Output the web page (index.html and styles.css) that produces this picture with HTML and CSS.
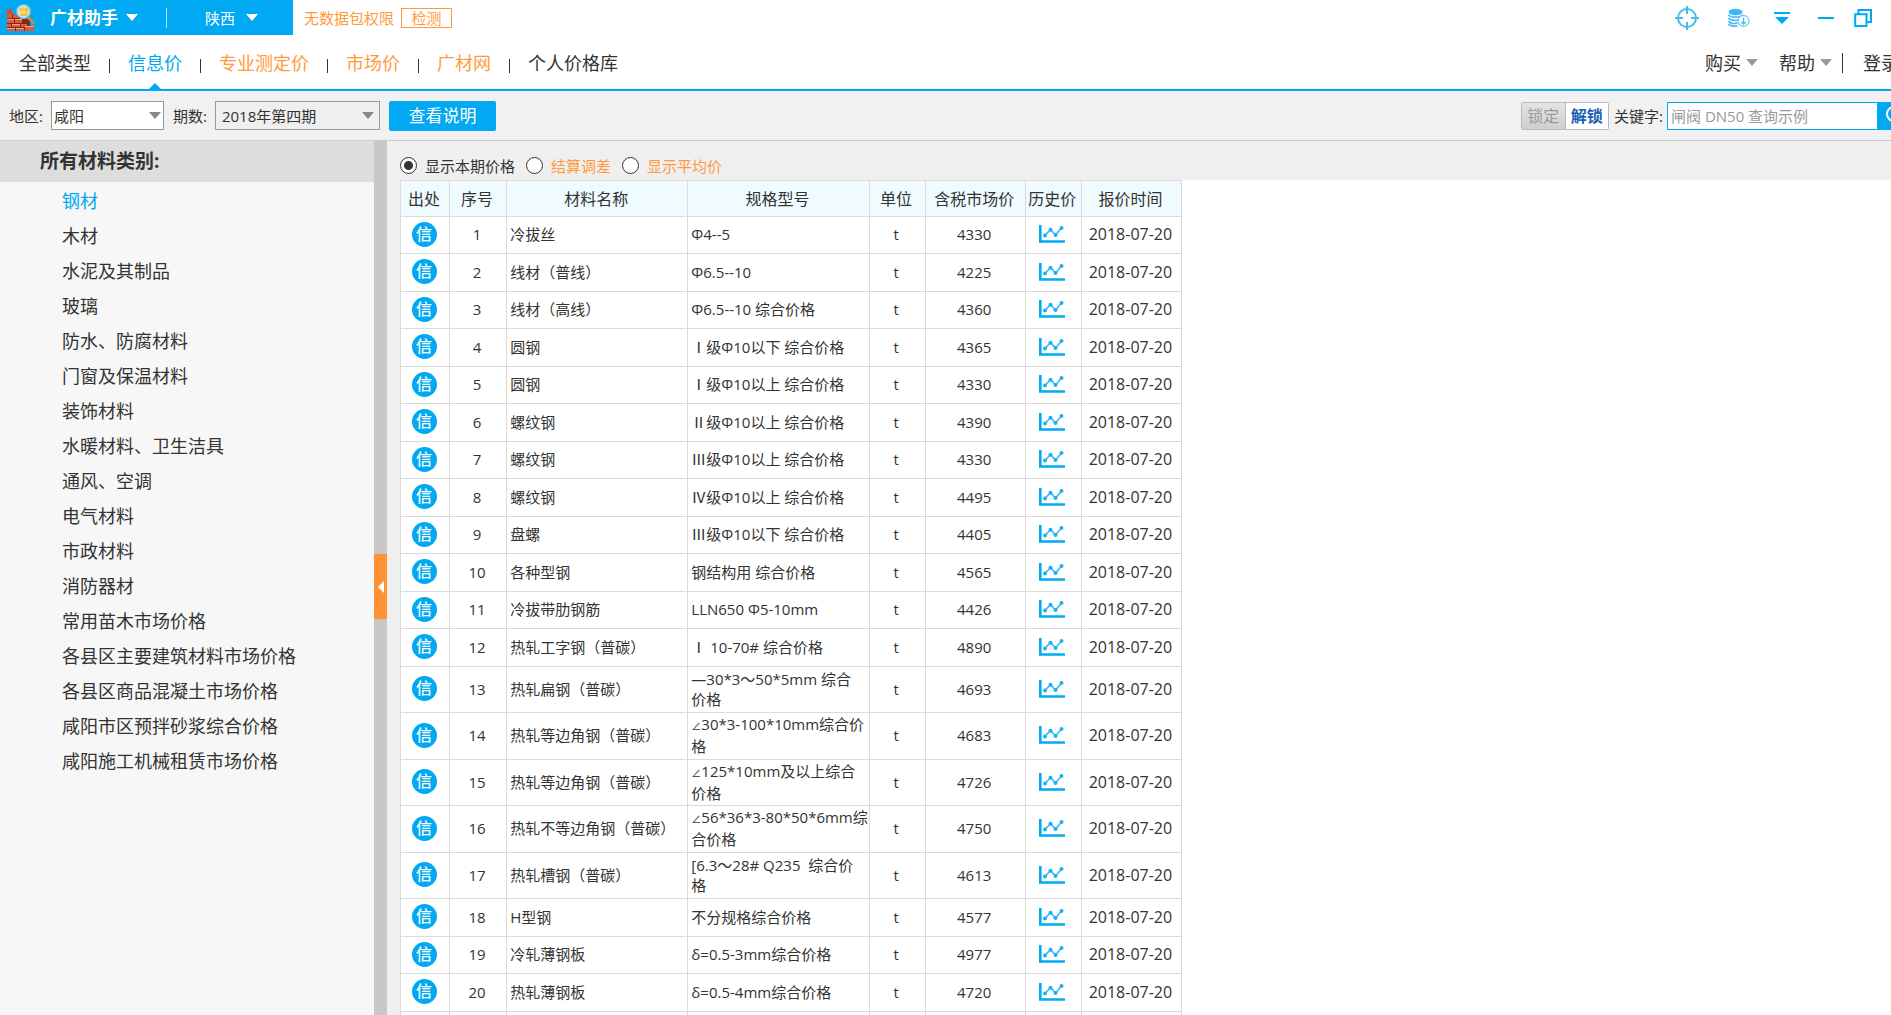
FILE: index.html
```html
<!DOCTYPE html>
<html lang="zh-CN">
<head>
<meta charset="utf-8">
<title>广材助手</title>
<link rel="stylesheet" href="styles.css">
</head>
<body>
<svg class="defs" aria-hidden="true">
  <symbol id="chart" viewBox="0 0 26 18"><path d="M1.300 0V16.500H26" fill="none" stroke="#00aaf2" stroke-width="2.600"/><path d="M6 10.500L11.500 4.500L16.500 10L22.500 3" fill="none" stroke="#38b9f5" stroke-width="1.600"/><g fill="#1db0f4"><circle cx="6" cy="10.500" r="2"/><circle cx="11.500" cy="4.800" r="2"/><circle cx="16.500" cy="10" r="2"/><circle cx="22.500" cy="3" r="2"/></g></symbol>
</svg>
<div class="app">
  <header class="titlebar">
    <div class="brand">
      <svg class="logo" viewBox="0 0 28 28" aria-hidden="true">
        <rect y="5" width="27" height="22" fill="none"/>
        <path d="M0 5h5v5H0z" fill="#e2452c"/>
        <path d="M0 10h9l5 3h4l5 3v11H0z" fill="#7c2a1f"/>
        <path d="M0 10h5v4H0zM6 10h5v4H6zM0 15h7v4H0zM8 15h7v4H8zM0 20h4v3H0zM5 20h8v3H5zM14 20h6v3h-6zM0 24h8v3H0zM9 24h8v3H9zM18 22h9v5h-9z" fill="#e2583a"/>
        <path d="M0 15h7v1H0zM8 15h7v1H8zM5 20h8v1H5zM9 24h8v1H9zM18 22h9v1h-9zM0 24h8v1H0z" fill="#f6a582"/>
        <path d="M21.500 14l5 5" stroke="#c98b2b" stroke-width="3" stroke-linecap="round"/>
        <circle cx="16.500" cy="7.500" r="7" fill="#cfeaf5" stroke="#6fb6d8" stroke-width="1.500"/>
        <path d="M12 5l3-2 2 2 2-2 3 2-1.500 3v4h-7V8z" fill="#f0c53c"/>
        <path d="M14.500 6.500h4v3h-4z" fill="#fbe584"/>
      </svg>
      <button class="brand-name" type="button">广材助手<i class="caret"></i></button>
      <i class="brand-sep"></i>
      <button class="province" type="button">陕西<i class="caret"></i></button>
    </div>
    <span class="notice">无数据包权限</span>
    <button class="detect" type="button">检测</button>
    <div class="window-tools">
      <button type="button" aria-label="定位"><svg width="26" height="26" viewBox="0 0 26 26" fill="none" stroke="#45bfe9"><circle cx="13" cy="13" r="9" stroke-width="2"/><path d="M13 1v8M13 17v8M1 13h8M17 13h8" stroke-width="2"/></svg></button>
      <button type="button" aria-label="数据包下载"><svg width="22" height="20" viewBox="0 0 22 20"><ellipse cx="7.500" cy="4" rx="7" ry="3.200" fill="#3db8f6"/><path d="M.5 6.500c1 3.500 13 3.500 14 0M.5 9.800c1 3.200 11 3.200 13 1M.5 13c1 2.500 6 3 9 2M.5 16c1 2 6 2.500 9 2" fill="none" stroke="#4dbcf6" stroke-width="1.700"/><circle cx="15.500" cy="13" r="5.500" fill="#fff" stroke="#74c8f5" stroke-width="1.300"/><path d="M15.500 9.500v6.500M13.300 14l2.200 2.300 2.200-2.300" fill="none" stroke="#4dbcf6" stroke-width="1.400"/></svg></button>
      <button type="button" aria-label="菜单"><svg width="16" height="14" viewBox="0 0 16 14" fill="#00a9f1"><path d="M0 1h16v2H0zM1 6h14l-7 7z"/></svg></button>
      <button type="button" aria-label="最小化"><svg width="16" height="14" viewBox="0 0 16 14" fill="#00a9f1"><path d="M0 6h16v2H0z"/></svg></button>
      <button type="button" aria-label="还原"><svg width="18" height="18" viewBox="0 0 18 18" fill="none" stroke="#00a9f1" stroke-width="2"><path d="M4.500 5V1H17v12h-4"/><path d="M1.200 5.200h11.300V17H1.200z"/></svg></button>
    </div>
  </header>

  <nav class="nav">
    <a href="#all">全部类型</a><i></i>
    <a href="#info" class="active">信息价</a><i></i>
    <a href="#pro" class="paid">专业测定价</a><i></i>
    <a href="#market" class="paid">市场价</a><i></i>
    <a href="#gcw" class="paid">广材网</a><i></i>
    <a href="#mine">个人价格库</a>
    <div class="account">
      <button type="button">购买<b class="caret gray"></b></button>
      <button type="button">帮助<b class="caret gray"></b></button>
      <a href="#login">登录</a>
    </div>
  </nav>

  <div class="toolbar">
    <label for="area">地区:</label>
    <span class="picker area"><select id="area"><option>咸阳</option></select></span>
    <label for="period">期数:</label>
    <span class="picker period"><select id="period"><option>2018年第四期</option></select></span>
    <button class="primary" type="button">查看说明</button>
    <div class="search">
      <div class="lock"><button type="button" disabled>锁定</button><button type="button" class="on">解锁</button></div>
      <label for="kw">关键字:</label>
      <input id="kw" type="text" placeholder="闸阀 DN50 查询示例"><button class="go" type="button" aria-label="搜索"><svg width="22" height="22" viewBox="0 0 22 22" fill="none" stroke="#fff" stroke-width="2"><circle cx="9" cy="9" r="7"/><path d="M14 14l6 6"/></svg></button>
    </div>
  </div>

  <div class="body">
    <aside class="sidebar">
      <h2>所有材料类别:</h2>
      <ul>
        <li><a href="#c1" class="active">钢材</a></li>
        <li><a href="#c2">木材</a></li>
        <li><a href="#c3">水泥及其制品</a></li>
        <li><a href="#c4">玻璃</a></li>
        <li><a href="#c5">防水、防腐材料</a></li>
        <li><a href="#c6">门窗及保温材料</a></li>
        <li><a href="#c7">装饰材料</a></li>
        <li><a href="#c8">水暖材料、卫生洁具</a></li>
        <li><a href="#c9">通风、空调</a></li>
        <li><a href="#c10">电气材料</a></li>
        <li><a href="#c11">市政材料</a></li>
        <li><a href="#c12">消防器材</a></li>
        <li><a href="#c13">常用苗木市场价格</a></li>
        <li><a href="#c14">各县区主要建筑材料市场价格</a></li>
        <li><a href="#c15">各县区商品混凝土市场价格</a></li>
        <li><a href="#c16">咸阳市区预拌砂浆综合价格</a></li>
        <li><a href="#c17">咸阳施工机械租赁市场价格</a></li>
      </ul>
    </aside>
    <div class="splitter"><button type="button" aria-label="收起"></button></div>
    <main class="main">
      <div class="modes">
        <input type="radio" name="mode" id="m1" checked><label for="m1">显示本期价格</label>
        <input type="radio" name="mode" id="m2"><label for="m2" class="paid">结算调差</label>
        <input type="radio" name="mode" id="m3"><label for="m3" class="paid">显示平均价</label>
      </div>
      <div class="sheet">
      <table>
        <colgroup><col class="w-src"><col class="w-no"><col class="w-text"><col class="w-text"><col class="w-unit"><col class="w-wide"><col class="w-unit"><col class="w-wide"></colgroup>
        <thead><tr><th>出处</th><th>序号</th><th>材料名称</th><th>规格型号</th><th>单位</th><th>含税市场价</th><th>历史价</th><th>报价时间</th></tr></thead>
        <tbody>
          <tr><td><span class="badge">信</span></td><td>1</td><td>冷拔丝</td><td>Φ4--5</td><td>t</td><td>4330</td><td><svg class="chart"><use href="#chart"/></svg></td><td>2018-07-20</td></tr>
          <tr><td><span class="badge">信</span></td><td>2</td><td>线材（普线）</td><td>Φ6.5--10</td><td>t</td><td>4225</td><td><svg class="chart"><use href="#chart"/></svg></td><td>2018-07-20</td></tr>
          <tr><td><span class="badge">信</span></td><td>3</td><td>线材（高线）</td><td>Φ6.5--10 综合价格</td><td>t</td><td>4360</td><td><svg class="chart"><use href="#chart"/></svg></td><td>2018-07-20</td></tr>
          <tr><td><span class="badge">信</span></td><td>4</td><td>圆钢</td><td>Ⅰ级Φ10以下 综合价格</td><td>t</td><td>4365</td><td><svg class="chart"><use href="#chart"/></svg></td><td>2018-07-20</td></tr>
          <tr><td><span class="badge">信</span></td><td>5</td><td>圆钢</td><td>Ⅰ级Φ10以上 综合价格</td><td>t</td><td>4330</td><td><svg class="chart"><use href="#chart"/></svg></td><td>2018-07-20</td></tr>
          <tr><td><span class="badge">信</span></td><td>6</td><td>螺纹钢</td><td>Ⅱ级Φ10以上 综合价格</td><td>t</td><td>4390</td><td><svg class="chart"><use href="#chart"/></svg></td><td>2018-07-20</td></tr>
          <tr><td><span class="badge">信</span></td><td>7</td><td>螺纹钢</td><td>Ⅲ级Φ10以上 综合价格</td><td>t</td><td>4330</td><td><svg class="chart"><use href="#chart"/></svg></td><td>2018-07-20</td></tr>
          <tr><td><span class="badge">信</span></td><td>8</td><td>螺纹钢</td><td>Ⅳ级Φ10以上 综合价格</td><td>t</td><td>4495</td><td><svg class="chart"><use href="#chart"/></svg></td><td>2018-07-20</td></tr>
          <tr><td><span class="badge">信</span></td><td>9</td><td>盘螺</td><td>Ⅲ级Φ10以下 综合价格</td><td>t</td><td>4405</td><td><svg class="chart"><use href="#chart"/></svg></td><td>2018-07-20</td></tr>
          <tr><td><span class="badge">信</span></td><td>10</td><td>各种型钢</td><td>钢结构用 综合价格</td><td>t</td><td>4565</td><td><svg class="chart"><use href="#chart"/></svg></td><td>2018-07-20</td></tr>
          <tr><td><span class="badge">信</span></td><td>11</td><td>冷拔带肋钢筋</td><td>LLN650 Φ5-10mm</td><td>t</td><td>4426</td><td><svg class="chart"><use href="#chart"/></svg></td><td>2018-07-20</td></tr>
          <tr><td><span class="badge">信</span></td><td>12</td><td>热轧工字钢（普碳）</td><td>Ⅰ 10-70# 综合价格</td><td>t</td><td>4890</td><td><svg class="chart"><use href="#chart"/></svg></td><td>2018-07-20</td></tr>
          <tr class="tall"><td><span class="badge">信</span></td><td>13</td><td>热轧扁钢（普碳）</td><td>—30*3～50*5mm 综合<br>价格</td><td>t</td><td>4693</td><td><svg class="chart"><use href="#chart"/></svg></td><td>2018-07-20</td></tr>
          <tr class="tall"><td><span class="badge">信</span></td><td>14</td><td>热轧等边角钢（普碳）</td><td><span class="angle">∠</span>30*3-100*10mm综合价<br>格</td><td>t</td><td>4683</td><td><svg class="chart"><use href="#chart"/></svg></td><td>2018-07-20</td></tr>
          <tr class="tall"><td><span class="badge">信</span></td><td>15</td><td>热轧等边角钢（普碳）</td><td><span class="angle">∠</span>125*10mm及以上综合<br>价格</td><td>t</td><td>4726</td><td><svg class="chart"><use href="#chart"/></svg></td><td>2018-07-20</td></tr>
          <tr class="tall"><td><span class="badge">信</span></td><td>16</td><td>热轧不等边角钢（普碳）</td><td><span class="angle">∠</span>56*36*3-80*50*6mm综<br>合价格</td><td>t</td><td>4750</td><td><svg class="chart"><use href="#chart"/></svg></td><td>2018-07-20</td></tr>
          <tr class="tall"><td><span class="badge">信</span></td><td>17</td><td>热轧槽钢（普碳）</td><td>[6.3～28# Q235&nbsp; 综合价<br>格</td><td>t</td><td>4613</td><td><svg class="chart"><use href="#chart"/></svg></td><td>2018-07-20</td></tr>
          <tr><td><span class="badge">信</span></td><td>18</td><td>H型钢</td><td>不分规格综合价格</td><td>t</td><td>4577</td><td><svg class="chart"><use href="#chart"/></svg></td><td>2018-07-20</td></tr>
          <tr><td><span class="badge">信</span></td><td>19</td><td>冷轧薄钢板</td><td>δ=0.5-3mm综合价格</td><td>t</td><td>4977</td><td><svg class="chart"><use href="#chart"/></svg></td><td>2018-07-20</td></tr>
          <tr><td><span class="badge">信</span></td><td>20</td><td>热轧薄钢板</td><td>δ=0.5-4mm综合价格</td><td>t</td><td>4720</td><td><svg class="chart"><use href="#chart"/></svg></td><td>2018-07-20</td></tr>
          <tr><td></td><td></td><td></td><td></td><td></td><td></td><td></td><td></td></tr>
        </tbody>
      </table>
      </div>
    </main>
  </div>
</div>
</body>
</html>
```
FILE: styles.css
```css
:root {
  --blue: #00a9f1;
  --orange: #ff9a3c;
  --text: #333;
  --line: #dadada;
}
* { box-sizing: border-box; }
body {
  margin: 0;
  height: 100vh;
  overflow: hidden;
  background: #fff;
  color: var(--text);
  font: 15px/20px "Open Sans", "Noto Sans CJK SC", sans-serif;
}
button, input, select { font: inherit; color: inherit; }
button { padding: 0; border: 0; background: none; white-space: nowrap; }
a { color: inherit; text-decoration: none; }
.defs { display: none; }

/* The window runs slightly past the right edge of the screen. */
.app {
  display: flex;
  flex-direction: column;
  width: calc(100% + 24px);
  height: 100%;
}

.caret {
  display: inline-block;
  border: 6px solid transparent;
  border-top: 7px solid #fff;
  border-bottom: 0;
}
.caret.gray { border-top-color: #999; }
.paid { color: var(--orange); }

/* Title bar */
.titlebar { display: flex; align-items: center; height: 35px; }
.brand {
  display: flex;
  align-items: center;
  width: 293px;
  height: 35px;
  padding-left: 7px;
  background: var(--blue);
  color: #fff;
}
.logo { width: 28px; height: 28px; }
.brand-name, .province { display: flex; align-items: center; gap: 8px; }
.brand-name { margin-left: 15px; font-size: 17px; font-weight: 700; }
.brand-sep { width: 1px; height: 20px; margin: 0 38px 0 28px; background: #b5e4fb; }
.province { gap: 11px; }
.notice { margin-left: 11px; color: var(--orange); }
.detect {
  width: 51px;
  height: 20px;
  margin-left: 7px;
  border: 1px solid var(--orange);
  color: var(--orange);
  line-height: 18px;
}
.window-tools { display: flex; align-items: center; margin-left: auto; margin-right: 43px; }
.window-tools button { display: flex; }
.window-tools button + button { margin-left: 28px; }
.window-tools button:nth-child(3) { margin-left: 24px; }
.window-tools button:last-child { margin-left: 20px; }

/* Navigation */
.nav {
  display: flex;
  align-items: center;
  height: 56px;
  padding-left: 19px;
  border-bottom: 2px solid var(--blue);
  font-size: 18px;
}
.nav > i { width: 1px; height: 14px; margin: 8px 18px 0; background: var(--text); }
.nav > a { position: relative; padding-top: 2px; line-height: 52px; }
.nav .active { color: var(--blue); }
.nav .active::after {
  content: "";
  position: absolute;
  bottom: 0;
  left: calc(50% - 6px);
  border: 6px solid transparent;
  border-top: 0;
  border-bottom-color: var(--blue);
}
.account { display: flex; align-items: center; margin-left: auto; padding-top: 1px; }
.account button { display: flex; align-items: center; gap: 5px; margin-right: 21px; }
.account button:nth-child(2) { margin-right: 10px; }
.account a { width: 73px; padding-left: 20px; border-left: 1px solid var(--text); }

/* Filters */
.toolbar {
  display: flex;
  align-items: center;
  height: 50px;
  padding: 0 0 0 9px;
  background: #f1f1f1;
  border-bottom: 1px solid #ccc;
}
.picker { position: relative; margin: 0 9px 0 8px; }
.picker select {
  appearance: none;
  width: 100%;
  height: 29px;
  padding: 0 2px;
  border: 1px solid #999;
  border-radius: 0;
  background: #fff;
}
.picker::after {
  content: "";
  position: absolute;
  top: 11px;
  right: 3px;
  border: 6px solid transparent;
  border-top: 7px solid #888;
  border-bottom: 0;
  pointer-events: none;
}
.area { width: 113px; }
.period { width: 165px; }
.period select { padding: 0 6px; background: #efefef; }
.period::after { right: 6px; }
.primary {
  width: 107px;
  height: 30px;
  border-radius: 2px;
  background: var(--blue);
  color: #fff;
  font-size: 17px;
}
.search { display: flex; align-items: center; margin-left: auto; }
.lock {
  display: flex;
  width: 88px;
  height: 28px;
  margin-right: 5px;
  border: 1px solid #bbb;
  border-radius: 2px;
  overflow: hidden;
  font-size: 16px;
}
.lock button { flex: 1; background: linear-gradient(#e4e4e4, #cfcfcf); color: #999; }
.lock .on { border-left: 1px solid #bbb; background: #fff; color: #1b62b3; font-weight: 700; }
.search input {
  width: 211px;
  height: 28px;
  margin-left: 4px;
  padding: 0 3px;
  border: 1px solid var(--blue);
  border-radius: 0;
  background: #fff;
}
.search input::placeholder { color: #999; opacity: 1; }
.go { display: flex; align-items: center; width: 37px; height: 28px; padding-left: 7px; background: var(--blue); }

/* Content */
.body { display: flex; flex: 1; min-height: 0; }
.sidebar { width: 374px; background: #f7f7f7; }
.sidebar h2 {
  margin: 0 0 2px;
  padding-left: 40px;
  background: #ddd;
  font-size: 19px;
  line-height: 41px;
}
.sidebar ul { margin: 0; padding: 0; list-style: none; }
.sidebar li { padding-left: 62px; font-size: 18px; line-height: 35px; }
.sidebar .active { color: var(--blue); }
.splitter { width: 13px; padding-top: 413px; background: #c8c7c5; }
.splitter button {
  display: flex;
  align-items: center;
  justify-content: center;
  width: 13px;
  height: 65px;
  background: #ff9235;
}
.splitter button::before {
  content: "";
  border: 6px solid transparent;
  border-right-color: #fff;
  border-left: 0;
}
.main { display: flex; flex: 1; flex-direction: column; min-width: 0; padding-left: 13px; background: #efefef; }
.modes { display: flex; align-items: center; height: 39px; padding-top: 10px; }
.modes input {
  appearance: none;
  width: 17px;
  height: 17px;
  margin: 0 8px 0 0;
  border: 1px solid #333;
  border-radius: 50%;
  background: #fff;
}
.modes input:checked { background: radial-gradient(circle, #333 4px, #fff 5px); }
.modes label { margin-right: 11px; }
.sheet { flex: 1; min-height: 0; overflow: hidden; background: #fff; }

table { width: 782px; table-layout: fixed; border-collapse: collapse; }
.w-src { width: 49px; }
.w-no { width: 57px; }
.w-text { width: 181px; }
.w-unit { width: 56px; }
.w-wide { width: 100px; }
th, td { padding: 0 2px 0 0; border: 1px solid var(--line); text-align: center; white-space: nowrap; }
th { height: 36px; background: #effbfe; font-size: 16px; font-weight: 400; }
td { height: 37px; padding-bottom: 2px; line-height: 20px; }
tr:nth-child(even) td { height: 38px; }
.tall td { height: 46px; }
.tall:nth-child(even) td { height: 47px; }
td:nth-child(3), td:nth-child(4) { padding-left: 3px; text-align: left; }
td:last-child { font-size: 16px; }
.angle { font-size: 10px; }
.badge {
  display: block;
  width: 25px;
  height: 25px;
  margin: 0 auto;
  border-radius: 50%;
  background: var(--blue);
  color: #fff;
  font-size: 16px;
  font-weight: 500;
  line-height: 24px;
}
.chart { display: block; width: 26px; height: 18px; margin: 0 auto; }
```
